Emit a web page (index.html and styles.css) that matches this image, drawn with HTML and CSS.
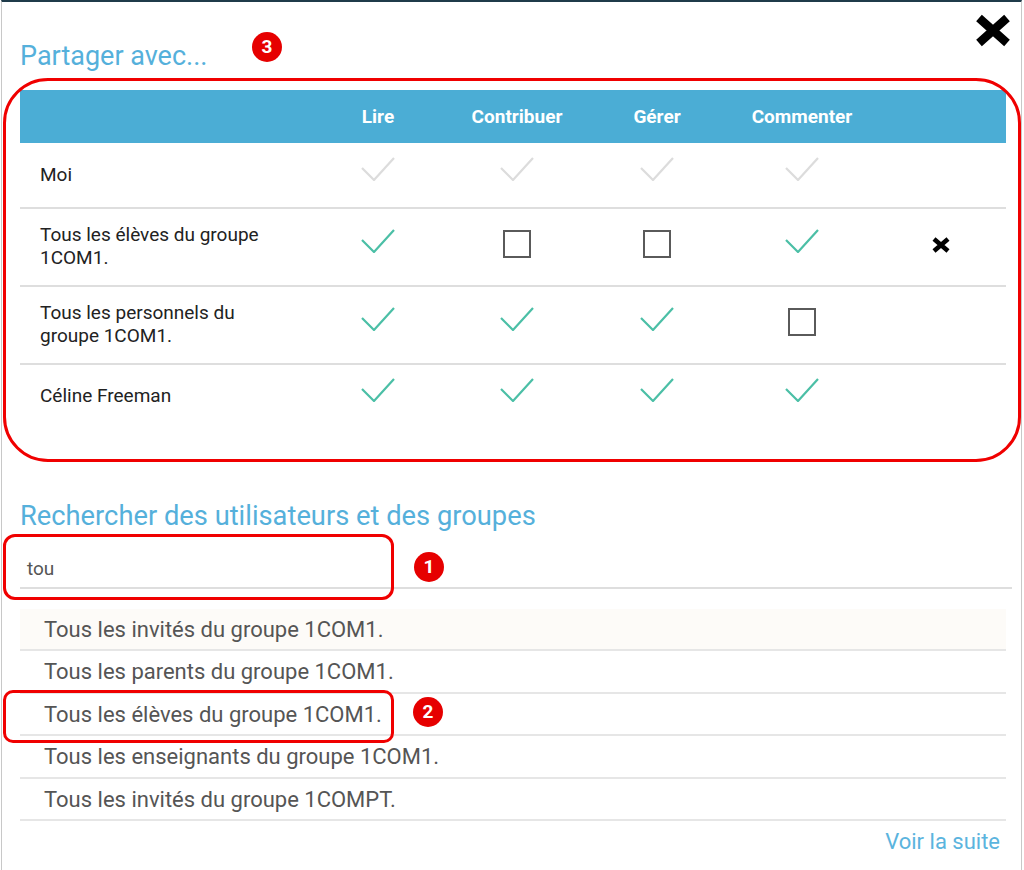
FILE: index.html
```html
<!DOCTYPE html>
<html lang="fr">
<head>
<meta charset="utf-8">
<title>Partager avec...</title>
<link rel="stylesheet" href="styles.css">
</head>
<body>
<div class="page">
  <button class="close" aria-label="Fermer">
    <svg width="36" height="33" viewBox="0 0 36 33"><path d="M4 4 L32 29 M32 4 L4 29" stroke="#000" stroke-width="8.5" stroke-linecap="butt" fill="none"/></svg>
  </button>

  <h2 class="section-title">Partager avec...</h2>

  <div class="share-table">
    <div class="row head">
      <div class="cell name"></div>
      <div class="cell">Lire</div>
      <div class="cell">Contribuer</div>
      <div class="cell">Gérer</div>
      <div class="cell">Commenter</div>
      <div class="cell"></div>
    </div>
    <div class="row">
      <div class="cell name">Moi</div>
      <div class="cell"><svg class="check off" viewBox="0 0 34 24"><polyline points="1,11 13,23 33,1"/></svg></div>
      <div class="cell"><svg class="check off" viewBox="0 0 34 24"><polyline points="1,11 13,23 33,1"/></svg></div>
      <div class="cell"><svg class="check off" viewBox="0 0 34 24"><polyline points="1,11 13,23 33,1"/></svg></div>
      <div class="cell"><svg class="check off" viewBox="0 0 34 24"><polyline points="1,11 13,23 33,1"/></svg></div>
      <div class="cell"></div>
    </div>
    <div class="row">
      <div class="cell name">Tous les élèves du groupe 1COM1.</div>
      <div class="cell"><svg class="check" viewBox="0 0 34 24"><polyline points="1,11 13,23 33,1"/></svg></div>
      <div class="cell"><span class="box"></span></div>
      <div class="cell"><span class="box"></span></div>
      <div class="cell"><svg class="check" viewBox="0 0 34 24"><polyline points="1,11 13,23 33,1"/></svg></div>
      <div class="cell"><svg class="remove" viewBox="0 0 20 18"><path d="M3 3 L17 15 M17 3 L3 15"/></svg></div>
    </div>
    <div class="row">
      <div class="cell name">Tous les personnels du groupe 1COM1.</div>
      <div class="cell"><svg class="check" viewBox="0 0 34 24"><polyline points="1,11 13,23 33,1"/></svg></div>
      <div class="cell"><svg class="check" viewBox="0 0 34 24"><polyline points="1,11 13,23 33,1"/></svg></div>
      <div class="cell"><svg class="check" viewBox="0 0 34 24"><polyline points="1,11 13,23 33,1"/></svg></div>
      <div class="cell"><span class="box"></span></div>
      <div class="cell"></div>
    </div>
    <div class="row">
      <div class="cell name">Céline Freeman</div>
      <div class="cell"><svg class="check" viewBox="0 0 34 24"><polyline points="1,11 13,23 33,1"/></svg></div>
      <div class="cell"><svg class="check" viewBox="0 0 34 24"><polyline points="1,11 13,23 33,1"/></svg></div>
      <div class="cell"><svg class="check" viewBox="0 0 34 24"><polyline points="1,11 13,23 33,1"/></svg></div>
      <div class="cell"><svg class="check" viewBox="0 0 34 24"><polyline points="1,11 13,23 33,1"/></svg></div>
      <div class="cell"></div>
    </div>
  </div>

  <h2 class="section-title search-title">Rechercher des utilisateurs et des groupes</h2>
  <div class="search-input">tou</div>

  <ul class="results">
    <li class="first">Tous les invités du groupe 1COM1.</li>
    <li>Tous les parents du groupe 1COM1.</li>
    <li>Tous les élèves du groupe 1COM1.</li>
    <li>Tous les enseignants du groupe 1COM1.</li>
    <li>Tous les invités du groupe 1COMPT.</li>
  </ul>
  <div class="more"><a href="#">Voir la suite</a></div>

  <div class="mark mark-table"></div>
  <div class="mark mark-input"></div>
  <div class="mark mark-item"></div>
  <span class="badge badge-3">3</span>
  <span class="badge badge-1">1</span>
  <span class="badge badge-2">2</span>
</div>
</body>
</html>
```

FILE: styles.css
```css
* { box-sizing: border-box; }
html, body { margin: 0; padding: 0; background: #fff; }
body { font-family: Roboto, "Liberation Sans", sans-serif; color: #222; }

.page {
  position: relative;
  width: 1021px;
  min-height: 870px;
  margin-left: 1px;
  border-left: 1px solid #c8c8c8;
  border-right: 1px solid #c8c8c8;
  border-top: 2px solid #1f3b4a;
  padding: 38px 15px 0 18px;
}

.close {
  position: absolute;
  top: 12px;
  right: 10px;
  border: 0;
  background: none;
  padding: 0;
  cursor: pointer;
}
.close svg { display: block; }

.section-title {
  margin: 0;
  font-weight: 400;
  font-size: 27px;
  line-height: 32px;
  color: #55b0db;
}

.share-table { margin-top: 18px; }
.row {
  display: grid;
  grid-template-columns: 289px 138px 140px 140px 150px 128px;
  align-items: center;
  min-height: 64px;
  border-top: 2px solid #dedede;
}
.row.head {
  min-height: 53px;
  border-top: 0;
  background: #4badd5;
  color: #fff;
  font-weight: 700;
  font-size: 19px;
}
.row.head + .row { border-top: 0; }
.cell {
  display: flex;
  justify-content: center;
  align-items: center;
}
.cell.name {
  justify-content: flex-start;
  padding: 14px 28px 16px 20px;
  font-size: 19px;
  line-height: 23px;
  max-width: 268px;
}

.check {
  width: 34px;
  height: 24px;
  margin-bottom: 12px;
  fill: none;
  stroke: #4bbfa6;
  stroke-width: 2.2;
}
.check.off { stroke: #dcdcdc; }
.box {
  display: block;
  width: 28px;
  height: 28px;
  border: 2.5px solid #5a5a5a;
  margin-bottom: 6px;
}
.remove {
  width: 20px;
  height: 18px;
  margin-bottom: 4px;
  fill: none;
  stroke: #000;
  stroke-width: 4.6;
}

.search-title { margin-top: 73px; font-size: 27.3px; }
.search-input {
  margin-top: 17px;
  height: 40px;
  padding: 2px 0 0 7px;
  line-height: 36px;
  font-size: 19px;
  color: #555;
  border-bottom: 2px solid #dedede;
  width: 992px;
}

.results {
  list-style: none;
  margin: 20px 0 0;
  padding: 0;
}
.results li {
  height: 42.4px;
  padding: 2px 0 0 24px;
  line-height: 38.4px;
  font-size: 22px;
  color: #555;
  border-bottom: 2px solid #e6e6e6;
}
.results li.first { background: #fdfbf8; }

.more {
  text-align: right;
  padding: 8px 6px 0 0;
  font-size: 22px;
  line-height: 26px;
}
.more a { color: #5bb4de; text-decoration: none; }

.mark {
  position: absolute;
  border: 3px solid #f00000;
}
.mark-table { left: 1px; top: 76px; width: 1018px; height: 384px; border-radius: 45px; }
.mark-input { left: 1px; top: 532px; width: 391px; height: 66px; border-radius: 12px; }
.mark-item { left: 1px; top: 688px; width: 391px; height: 53px; border-radius: 10px; }

.badge {
  position: absolute;
  width: 30px;
  height: 30px;
  border-radius: 50%;
  background: #e60000;
  color: #fff;
  font-size: 19px;
  font-weight: 700;
  line-height: 30px;
  text-align: center;
}
.badge-3 { left: 250px; top: 30px; }
.badge-1 { left: 412px; top: 550px; }
.badge-2 { left: 411px; top: 695px; }
```
